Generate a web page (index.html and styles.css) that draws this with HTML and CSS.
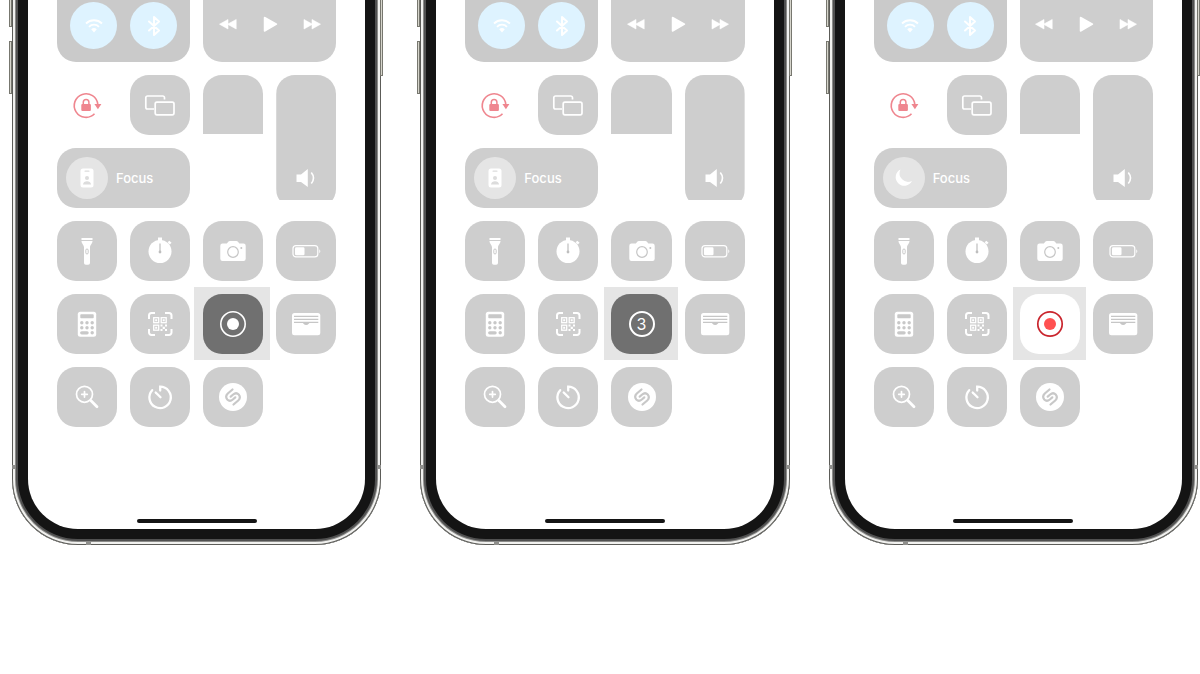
FILE: index.html
```
<!DOCTYPE html>
<html lang="en">
<head>
    <meta charset="UTF-8">
    <meta name="viewport" content="width=device-width, initial-scale=1.0">
    <title>Control Center</title>
    <link rel="stylesheet" href="styles.css">
</head>
<body>
    <!-- icon set, every icon is drawn on a 40x40 box -->
    <svg class="sprite" aria-hidden="true">
        <symbol id="wifi" viewBox="0 0 40 40">
            <g fill="none" stroke="#fff" stroke-width="1.800">
                <path d="M12 17.500a11.500 11.500 0 0 1 16 0"/>
                <path d="M15 20.800a7 7 0 0 1 10 0"/>
            </g>
            <path d="M17.200 23.300a4 4 0 0 1 5.600 0L20 26.500z" fill="#fff"/>
        </symbol>
        <symbol id="bluetooth" viewBox="0 0 40 40">
            <path d="M15 15.500l10 9-5 4.500V11l5 4.500-10 9" fill="none" stroke="#fff" stroke-width="2" stroke-linejoin="round" stroke-linecap="round"/>
        </symbol>
        <symbol id="rewind" viewBox="0 0 40 40">
            <path d="M20 15.500v9.500L11.500 20.200zM28.200 15.500v9.500L19.500 20.200z" fill="#fff" stroke="#fff" stroke-linejoin="round" stroke-width=".6"/>
        </symbol>
        <symbol id="play" viewBox="0 0 40 40">
            <path d="M14.500 13.500v13.500L26.500 20.200z" fill="#fff" stroke="#fff" stroke-width="1.500" stroke-linejoin="round"/>
        </symbol>
        <symbol id="forward" viewBox="0 0 40 40">
            <path d="M12 15.500v9.500L20.500 20.200zM20 15.500v9.500L28.500 20.200z" fill="#fff" stroke="#fff" stroke-linejoin="round" stroke-width=".6"/>
        </symbol>
        <symbol id="rotation" viewBox="0 0 40 40">
            <path d="M30.800 19.500a11.800 11.800 0 1 0-3.300 9.300" fill="none" stroke="#ef868f" stroke-width="1.600"/>
            <path d="M27.400 19h7l-3.500 5.300z" fill="#ef868f"/>
            <rect x="14.300" y="19" width="9.600" height="7" rx="1" fill="#ef868f"/>
            <path d="M16.300 19.500v-2.200a2.800 2.800 0 0 1 5.600 0v2.200" fill="none" stroke="#ef868f" stroke-width="1.500"/>
        </symbol>
        <symbol id="mirror" viewBox="0 0 40 40">
            <g fill="none" stroke="#fff" stroke-width="1.700">
                <path d="M14 24H7.500a1.700 1.700 0 0 1-1.700-1.700V12.700A1.700 1.700 0 0 1 7.500 11h15.300a1.700 1.700 0 0 1 1.700 1.700V14.500"/>
                <rect x="15.200" y="17.200" width="18.800" height="12.600" rx="1.700"/>
            </g>
        </symbol>
        <symbol id="volume" viewBox="0 0 40 40">
            <path d="M10.500 16.500h4.500L21.800 11v18L15 24h-4.500z" fill="#fff"/>
            <path d="M25.300 14.500q4.400 5.500 0 11" fill="none" stroke="#fff" stroke-width="1.600"/>
        </symbol>
        <symbol id="badge" viewBox="0 0 40 40">
            <rect x="13.500" y="10.500" width="13" height="19" rx="2.500" fill="#fff"/>
            <g fill="#dcdcdc">
                <rect x="17.500" y="12.500" width="5" height="1.300" rx=".6"/>
                <circle cx="20" cy="20" r="2"/>
                <path d="M16 26.500c0-4.500 8-4.500 8 0z"/>
            </g>
        </symbol>
        <symbol id="moon" viewBox="0 0 40 40">
            <path d="M16.500 11.500a8.600 8.600 0 1 0 11.500 11.500A8.600 8.600 0 0 1 16.500 11.500z" fill="#fff"/>
        </symbol>
        <symbol id="torch" viewBox="0 0 40 40">
            <path d="M14.500 7h11v2h-11zM14.500 10h11c0 3-2.500 3.500-2.500 6.500V32a1.800 1.800 0 0 1-1.800 1.800h-2.400A1.800 1.800 0 0 1 17 32V16.500c0-3-2.500-3.500-2.500-6.500z" fill="#fff"/>
            <rect x="18.800" y="18" width="2.400" height="5" rx="1.200" fill="none" stroke="#bebebe" stroke-width=".8"/>
        </symbol>
        <symbol id="stopwatch" viewBox="0 0 40 40">
            <circle cx="20" cy="20.500" r="11.500" fill="#fff"/>
            <path d="M18 6.500h4v3.500h-4z" fill="#fff"/>
            <path d="M28.500 10.500l2.200 2.200" stroke="#fff" stroke-width="2.400"/>
            <path d="M20 12.500v8" stroke="#bebebe" stroke-width="1.200"/>
            <circle cx="20" cy="21" r="1.400" fill="#bebebe"/>
        </symbol>
        <symbol id="camera" viewBox="0 0 40 40">
            <path d="M9.500 12.500h4.300l1.700-2a1.800 1.800 0 0 1 1.300-.6h6.600a1.800 1.800 0 0 1 1.300.6l1.700 2h4.100a2.200 2.200 0 0 1 2.200 2.200v13a2.200 2.200 0 0 1-2.200 2.200h-21a2.200 2.200 0 0 1-2.200-2.200v-13a2.200 2.200 0 0 1 2.200-2.200z" fill="#fff"/>
            <circle cx="20" cy="21" r="5.300" fill="none" stroke="#c6c6c6" stroke-width="1.200"/>
            <circle cx="28.300" cy="17" r="1" fill="#c6c6c6"/>
        </symbol>
        <symbol id="battery" viewBox="0 0 40 40">
            <rect x="7" y="14.600" width="24.800" height="11.300" rx="3" fill="none" stroke="#fff" stroke-width="1.200"/>
            <rect x="9" y="16.300" width="9.500" height="8" rx="1.300" fill="#fff"/>
            <path d="M33.300 18.300q2 2 0 4z" fill="#fff"/>
        </symbol>
        <symbol id="calculator" viewBox="0 0 40 40">
            <rect x="10.800" y="7.700" width="18.400" height="25" rx="2.500" fill="#fff"/>
            <g fill="#c8c8c8">
                <rect x="13.300" y="10.300" width="13.400" height="4" rx=".8"/>
                <circle cx="14.800" cy="18.800" r="1.700"/><circle cx="20" cy="18.800" r="1.700"/><circle cx="25.200" cy="18.800" r="1.700"/>
                <circle cx="14.800" cy="23.800" r="1.700"/><circle cx="20" cy="23.800" r="1.700"/><circle cx="25.200" cy="23.800" r="1.700"/>
                <rect x="13.100" y="27.200" width="8.600" height="3.200" rx="1.600"/><circle cx="25.200" cy="28.800" r="1.700"/>
            </g>
        </symbol>
        <symbol id="qrcode" viewBox="0 0 40 40">
            <path d="M9 15v-3.500a2.500 2.500 0 0 1 2.500-2.500H15M25 9h4a2.500 2.500 0 0 1 2.500 2.500V15M31.500 25v3.500A2.500 2.500 0 0 1 29 31h-4M15 31h-3.500A2.500 2.500 0 0 1 9 28.500V25" fill="none" stroke="#fff" stroke-width="2"/>
            <g fill="none" stroke="#fff" stroke-width="1.300">
                <rect x="13.700" y="13.700" width="5" height="5"/><rect x="21.200" y="13.700" width="5" height="5"/><rect x="13.700" y="21.200" width="5" height="5"/>
            </g>
            <path d="M15.200 15.200h2v2h-2zM22.700 15.200h2v2h-2zM15.200 22.700h2v2h-2zM20.500 20.500h2v2h-2zM25 20.500h2v2h-2zM22.700 22.700h2.200v2.200h-2.200zM20.500 25h2v2h-2zM25 25h2v2h-2z" fill="#fff"/>
        </symbol>
        <symbol id="record" viewBox="0 0 40 40">
            <circle cx="20" cy="20" r="12.200" fill="none" stroke="#fff" stroke-width="1.600"/>
            <circle cx="20" cy="20" r="6" fill="#fff"/>
        </symbol>
        <symbol id="recording" viewBox="0 0 40 40">
            <circle cx="20" cy="20" r="12.200" fill="none" stroke="#c9252d" stroke-width="1.700"/>
            <circle cx="20" cy="20" r="6" fill="#ff5151"/>
        </symbol>
        <symbol id="wallet" viewBox="0 0 40 40">
            <rect x="6" y="9" width="28.300" height="22.300" rx="2.500" fill="#fff"/>
            <path d="M8 12.300h24.300M8 15.300h24.300M8 18.300h24.300" fill="none" stroke="#c6c6c6" stroke-width="1.200"/>
            <path d="M15.500 18h9.300q-1.300.3-1.800 1.500-2.900 3-5.700 0-.5-1.200-1.800-1.500z" fill="#c6c6c6"/>
        </symbol>
        <symbol id="magnifier" viewBox="0 0 40 40">
            <g fill="none" stroke="#fff" stroke-linecap="round">
                <circle cx="17.500" cy="17.300" r="8" stroke-width="1.700"/>
                <path d="M17.500 14.500v5.600M14.700 17.300h5.600" stroke-width="1.700"/>
                <path d="M23.800 23.600l6.200 6.200" stroke-width="2.800"/>
            </g>
        </symbol>
        <symbol id="timer" viewBox="0 0 40 40">
            <g fill="none" stroke="#fff" stroke-width="2.300" stroke-linecap="round">
                <path d="M20.200 13.500V9.700a10.700 10.700 0 1 1-8 3.500"/>
                <path d="M15.700 15.500l4.800 4.800"/>
            </g>
        </symbol>
        <symbol id="shazam" viewBox="0 0 40 40">
            <circle cx="20" cy="20" r="14" fill="#fff"/>
            <g fill="none" stroke="#c8c8c8" stroke-width="2.200" stroke-linecap="round">
                <path d="M19.500 12.500L14.800 16.500q-3 3-.5 6 2.500 2.500 5.500 0l2.500-2.200"/>
                <path d="M20.500 27.500L25.200 23.500q3-3 .5-6-2.500-2.500-5.500 0l-2.500 2.200"/>
            </g>
        </symbol>
    </svg>

    <main class="phones">
        <section class="phone">
            <span class="side volume-up"></span>
            <span class="side volume-down"></span>
            <span class="side power"></span>
            <span class="antenna left"></span>
            <span class="antenna right"></span>
            <span class="antenna bottom"></span>
            <div class="screen">
                <div class="controls">
                    <div class="module network">
                        <button aria-label="Wi-Fi"><svg class="icon"><use href="#wifi"/></svg></button>
                        <button aria-label="Bluetooth"><svg class="icon"><use href="#bluetooth"/></svg></button>
                    </div>
                    <div class="module media">
                        <button aria-label="Back"><svg class="icon"><use href="#rewind"/></svg></button>
                        <button aria-label="Play"><svg class="icon"><use href="#play"/></svg></button>
                        <button aria-label="Next"><svg class="icon"><use href="#forward"/></svg></button>
                    </div>
                    <button class="tile plain" aria-label="Rotation lock"><svg class="icon"><use href="#rotation"/></svg></button>
                    <button class="tile" aria-label="Screen mirroring"><svg class="icon"><use href="#mirror"/></svg></button>
                    <label class="slider brightness"><input type="range" aria-label="Brightness"></label>
                    <label class="slider sound"><input type="range" aria-label="Volume"><svg class="icon"><use href="#volume"/></svg></label>
                    <button class="focus"><span class="focus-icon"><svg class="icon"><use href="#badge"/></svg></span>Focus</button>
                    <button class="tile" aria-label="Flashlight"><svg class="icon"><use href="#torch"/></svg></button>
                    <button class="tile" aria-label="Stopwatch"><svg class="icon"><use href="#stopwatch"/></svg></button>
                    <button class="tile" aria-label="Camera"><svg class="icon"><use href="#camera"/></svg></button>
                    <button class="tile" aria-label="Low power mode"><svg class="icon"><use href="#battery"/></svg></button>
                    <button class="tile" aria-label="Calculator"><svg class="icon"><use href="#calculator"/></svg></button>
                    <button class="tile" aria-label="Scan code"><svg class="icon"><use href="#qrcode"/></svg></button>
                    <div class="highlight wide">
                        <button class="tile dark" aria-label="Record screen"><svg class="icon"><use href="#record"/></svg></button>
                    </div>
                    <button class="tile" aria-label="Wallet"><svg class="icon"><use href="#wallet"/></svg></button>
                    <button class="tile" aria-label="Magnifier"><svg class="icon"><use href="#magnifier"/></svg></button>
                    <button class="tile" aria-label="Timer"><svg class="icon"><use href="#timer"/></svg></button>
                    <button class="tile" aria-label="Music recognition"><svg class="icon"><use href="#shazam"/></svg></button>
                </div>
                <div class="home-bar"></div>
            </div>
        </section>

        <section class="phone">
            <span class="side volume-up"></span>
            <span class="side volume-down"></span>
            <span class="side power"></span>
            <span class="antenna left"></span>
            <span class="antenna right"></span>
            <span class="antenna bottom"></span>
            <div class="screen">
                <div class="controls">
                    <div class="module network">
                        <button aria-label="Wi-Fi"><svg class="icon"><use href="#wifi"/></svg></button>
                        <button aria-label="Bluetooth"><svg class="icon"><use href="#bluetooth"/></svg></button>
                    </div>
                    <div class="module media">
                        <button aria-label="Back"><svg class="icon"><use href="#rewind"/></svg></button>
                        <button aria-label="Play"><svg class="icon"><use href="#play"/></svg></button>
                        <button aria-label="Next"><svg class="icon"><use href="#forward"/></svg></button>
                    </div>
                    <button class="tile plain" aria-label="Rotation lock"><svg class="icon"><use href="#rotation"/></svg></button>
                    <button class="tile" aria-label="Screen mirroring"><svg class="icon"><use href="#mirror"/></svg></button>
                    <label class="slider brightness"><input type="range" aria-label="Brightness"></label>
                    <label class="slider sound"><input type="range" aria-label="Volume"><svg class="icon"><use href="#volume"/></svg></label>
                    <button class="focus"><span class="focus-icon"><svg class="icon"><use href="#badge"/></svg></span>Focus</button>
                    <button class="tile" aria-label="Flashlight"><svg class="icon"><use href="#torch"/></svg></button>
                    <button class="tile" aria-label="Stopwatch"><svg class="icon"><use href="#stopwatch"/></svg></button>
                    <button class="tile" aria-label="Camera"><svg class="icon"><use href="#camera"/></svg></button>
                    <button class="tile" aria-label="Low power mode"><svg class="icon"><use href="#battery"/></svg></button>
                    <button class="tile" aria-label="Calculator"><svg class="icon"><use href="#calculator"/></svg></button>
                    <button class="tile" aria-label="Scan code"><svg class="icon"><use href="#qrcode"/></svg></button>
                    <div class="highlight">
                        <button class="tile dark"><span class="countdown">3</span></button>
                    </div>
                    <button class="tile" aria-label="Wallet"><svg class="icon"><use href="#wallet"/></svg></button>
                    <button class="tile" aria-label="Magnifier"><svg class="icon"><use href="#magnifier"/></svg></button>
                    <button class="tile" aria-label="Timer"><svg class="icon"><use href="#timer"/></svg></button>
                    <button class="tile" aria-label="Music recognition"><svg class="icon"><use href="#shazam"/></svg></button>
                </div>
                <div class="home-bar"></div>
            </div>
        </section>

        <section class="phone">
            <span class="side volume-up"></span>
            <span class="side volume-down"></span>
            <span class="side power"></span>
            <span class="antenna left"></span>
            <span class="antenna right"></span>
            <span class="antenna bottom"></span>
            <div class="screen">
                <div class="controls">
                    <div class="module network">
                        <button aria-label="Wi-Fi"><svg class="icon"><use href="#wifi"/></svg></button>
                        <button aria-label="Bluetooth"><svg class="icon"><use href="#bluetooth"/></svg></button>
                    </div>
                    <div class="module media">
                        <button aria-label="Back"><svg class="icon"><use href="#rewind"/></svg></button>
                        <button aria-label="Play"><svg class="icon"><use href="#play"/></svg></button>
                        <button aria-label="Next"><svg class="icon"><use href="#forward"/></svg></button>
                    </div>
                    <button class="tile plain" aria-label="Rotation lock"><svg class="icon"><use href="#rotation"/></svg></button>
                    <button class="tile" aria-label="Screen mirroring"><svg class="icon"><use href="#mirror"/></svg></button>
                    <label class="slider brightness"><input type="range" aria-label="Brightness"></label>
                    <label class="slider sound"><input type="range" aria-label="Volume"><svg class="icon"><use href="#volume"/></svg></label>
                    <button class="focus"><span class="focus-icon"><svg class="icon"><use href="#moon"/></svg></span>Focus</button>
                    <button class="tile" aria-label="Flashlight"><svg class="icon"><use href="#torch"/></svg></button>
                    <button class="tile" aria-label="Stopwatch"><svg class="icon"><use href="#stopwatch"/></svg></button>
                    <button class="tile" aria-label="Camera"><svg class="icon"><use href="#camera"/></svg></button>
                    <button class="tile" aria-label="Low power mode"><svg class="icon"><use href="#battery"/></svg></button>
                    <button class="tile" aria-label="Calculator"><svg class="icon"><use href="#calculator"/></svg></button>
                    <button class="tile" aria-label="Scan code"><svg class="icon"><use href="#qrcode"/></svg></button>
                    <div class="highlight">
                        <button class="tile white" aria-label="Stop recording"><svg class="icon"><use href="#recording"/></svg></button>
                    </div>
                    <button class="tile" aria-label="Wallet"><svg class="icon"><use href="#wallet"/></svg></button>
                    <button class="tile" aria-label="Magnifier"><svg class="icon"><use href="#magnifier"/></svg></button>
                    <button class="tile" aria-label="Timer"><svg class="icon"><use href="#timer"/></svg></button>
                    <button class="tile" aria-label="Music recognition"><svg class="icon"><use href="#shazam"/></svg></button>
                </div>
                <div class="home-bar"></div>
            </div>
        </section>
    </main>
</body>
</html>
```
FILE: styles.css
```
*{
    margin: 0;
    padding: 0;
    box-sizing: border-box;
}
body{
    background-color: #fff;
    font-family: Inter, "Liberation Sans", sans-serif;
}
button{
    border: none;
    background: none;
    color: #fff;
    font-family: inherit;
}
.sprite{
    position: absolute;
    width: 0;
    height: 0;
}
.icon{
    display: block;
    flex: none;
    width: 40px;
    height: 40px;
}
.phones{
    display: grid;
    grid-template-columns: repeat(3, 1fr);
    gap: 39px;
    padding: 0 2px 0 12px;
    overflow: hidden;
}

/* phone body, runs off the top of the page; the metal edge is a stack of inset rings */
.phone{
    position: relative;
    margin-top: -10px;
    padding: 10px 16px 16px;
    border-radius: 0 0 66px 66px;
    background-color: #141414;
    box-shadow:
        inset 0 0 0 1px #5c5c58,
        inset 0 0 0 3px #f1f1ef,
        inset 0 0 0 4px #8c8c8a,
        inset 0 0 0 6px #505050;
}
.side{
    position: absolute;
    width: 3px;
    border: 1px solid #77776f;
    background-color: #d6d5cc;
}
.volume-up{
    top: 0;
    left: -3px;
    height: 37px;
}
.volume-down{
    top: 51px;
    left: -3px;
    height: 53px;
}
.power{
    top: 0;
    right: -2px;
    height: 86px;
}
.antenna{
    position: absolute;
    width: 3px;
    height: 4px;
    background-color: #8f8f8c;
}
.antenna.left{
    top: 475px;
    left: 0;
}
.antenna.right{
    top: 475px;
    right: 0;
}
.antenna.bottom{
    bottom: 0;
    left: 74px;
    width: 5px;
    height: 3px;
}
.screen{
    padding: 0 29px 6px;
    border-radius: 0 0 50px 50px;
    background-color: #fff;
}
.controls{
    display: grid;
    grid-template-columns: repeat(4, 1fr);
    grid-template-rows: 62px repeat(5, 60px);
    gap: 13px;
}

/* modules */
.module{
    grid-column: span 2;
    display: flex;
    border-radius: 0 0 19px 19px;
    background-color: #cecece;
}
.network{
    gap: 13px;
    padding: 2px 13px;
    background-color: #cacaca;
}
.network button{
    display: flex;
    align-items: center;
    justify-content: center;
    width: 47px;
    height: 47px;
    border-radius: 50%;
    background-color: #def3ff;
}
.media{
    align-items: flex-start;
    justify-content: center;
    gap: 2px;
    padding-top: 4px;
}
.tile{
    display: flex;
    align-items: center;
    justify-content: center;
    width: 100%;
    height: 60px;
    border-radius: 19px;
    background-color: #cecece;
}
.tile.plain{
    background-color: transparent;
}
.tile.dark{
    background-color: #707070;
}
.tile.white{
    background-color: #fff;
}

/* vertical sliders, cut off at the lower end */
.slider{
    grid-row: span 2;
    display: flex;
    flex-direction: column;
    align-items: center;
    background-color: #cecece;
}
.slider input{
    flex: 1;
    width: 100%;
    min-height: 0;
    appearance: none;
    background: none;
    opacity: 0;
}
.brightness{
    height: 59px;
    border-radius: 19px 19px 0 0;
}
.sound{
    padding-bottom: 10px;
    border-radius: 19px;
    clip-path: inset(0 0 8px 0);
}
.focus{
    grid-column: span 2;
    display: flex;
    align-items: center;
    gap: 8px;
    padding-left: 9px;
    border-radius: 19px;
    background-color: #cecece;
    font-size: 13px;
    font-weight: 500;
}
.focus-icon{
    display: flex;
    align-items: center;
    justify-content: center;
    width: 42px;
    height: 42px;
    border-radius: 50%;
    background-color: #e5e5e5;
}
.highlight{
    position: relative;
}
.highlight::before{
    content: "";
    position: absolute;
    inset: -7px -6px -6px -7px;
    background-color: #e5e5e5;
}
.highlight.wide::before{
    left: -9px;
    right: -7px;
}
.highlight .tile{
    position: relative;
}
.countdown{
    width: 26px;
    height: 26px;
    border: 2px solid #fff;
    border-radius: 50%;
    font-size: 16px;
    line-height: 22px;
    text-align: center;
}
.home-bar{
    width: 120px;
    height: 4px;
    margin: 92px auto 0;
    border-radius: 2px;
    background-color: #141414;
}
```
